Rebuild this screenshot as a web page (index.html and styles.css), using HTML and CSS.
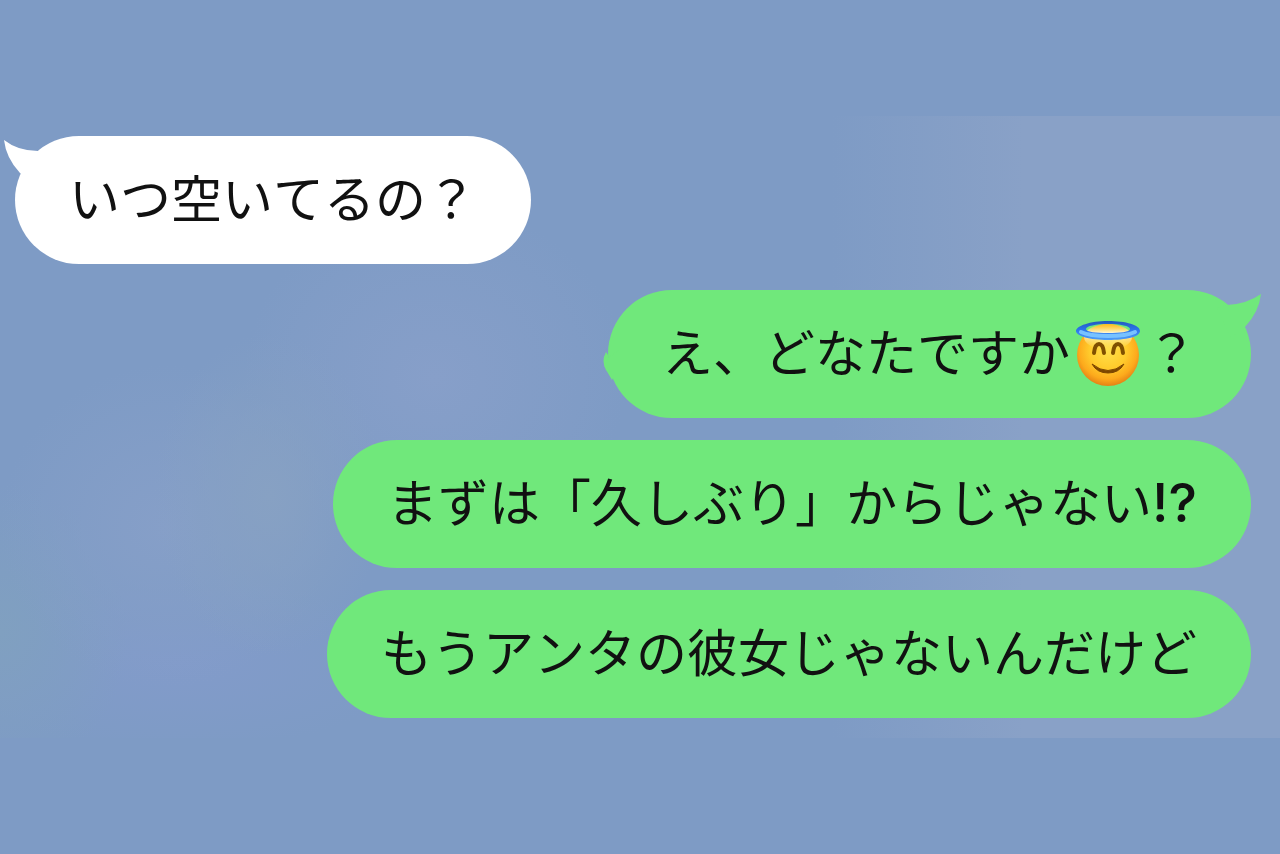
FILE: index.html
```html
<!DOCTYPE html>
<html lang="ja">
<head>
<meta charset="utf-8">
<meta name="viewport" content="width=device-width, initial-scale=1">
<title>トーク</title>
<link rel="stylesheet" href="styles.css">
</head>
<body>
<main class="chat">
  <p class="bubble bubble-in">
    <svg class="tail tail-in" viewBox="0 0 44 44" aria-hidden="true"><path d="M0 0Q14 11 34 11L44 14L30 44L16 33Q2 18 0 0Z"/></svg>
    いつ空いてるの？
  </p>
  <div class="replies">
    <p class="bubble bubble-out">
      <svg class="nub" viewBox="0 0 16 34" aria-hidden="true"><path d="M3 2L5 5L5 8L16 0V34L10 28L9 30Q5 23 3 20Q-2 11 3 2Z"/></svg>
      <svg class="tail tail-out" viewBox="0 0 44 44" aria-hidden="true"><path d="M44 0Q30 10 10 11L0 14L14 44L28 33Q42 18 44 0Z"/></svg>
      え、どなたですか<svg class="emoji" viewBox="0 0 64 66" role="img" aria-label="😇">
        <defs>
          <radialGradient id="face" cx=".5" cy=".42" r=".6">
            <stop offset="0" stop-color="#ffe04a"/><stop offset=".5" stop-color="#ffcb2c"/><stop offset=".78" stop-color="#fdaa1c"/><stop offset="1" stop-color="#e07a14"/>
          </radialGradient>
          <linearGradient id="shine" x1="0" y1="0" x2="0" y2="1">
            <stop offset="0" stop-color="#ffc21c" stop-opacity=".5"/><stop offset=".35" stop-color="#fffbe0" stop-opacity=".95"/><stop offset="1" stop-color="#ffe36a" stop-opacity="0"/>
          </linearGradient>
          <linearGradient id="halo" x1="0" y1="0" x2="0" y2="1">
            <stop offset="0" stop-color="#2259bd"/><stop offset=".45" stop-color="#2b74ea"/><stop offset="1" stop-color="#4f9df6"/>
          </linearGradient>
        </defs>
        <circle cx="32" cy="34" r="31" fill="url(#face)"/>
        <ellipse cx="32" cy="16" rx="24" ry="13" fill="url(#shine)"/>
        <path fill="url(#halo)" fill-rule="evenodd" d="M32 0C50 0 64 4 64 10S50 19 32 19S0 15 0 10S14 0 32 0ZM32 3C20 3 10 5 10 8S20 12 32 12S54 11 54 8S44 3 32 3Z"/>
        <path d="M5 11Q13 15 32 15T59 11" fill="none" stroke="#78c2ff" stroke-width="4" stroke-linecap="round"/>
        <path d="M18 32Q19 23 23 23T28 32M37 32Q38 23 42 23T47 32" fill="none" stroke="#805000" stroke-width="4" stroke-linecap="round"/>
        <path d="M16 43Q32 56 48 43Q43 52 32 52T16 43Z" fill="#7d4700" stroke="#7d4700" stroke-linejoin="round"/>
      </svg>？
    </p>
    <p class="bubble bubble-out">まずは「久しぶり」からじゃない<span class="punct">!?</span></p>
    <p class="bubble bubble-out">もうアンタの彼女じゃないんだけど</p>
  </div>
</main>
</body>
</html>
```
FILE: styles.css
```css
* {
  box-sizing: border-box;
}

body {
  margin: 0;
  min-height: 100vh;
  display: flex;
  flex-direction: column;
  justify-content: center;
  background: #7e9bc5;
  color: #111;
  font-family: "Noto Sans CJK JP", sans-serif;
  font-size: 51px;
  font-weight: 400;
  font-kerning: none;
  line-height: 64px;
}

.chat {
  display: flex;
  flex-direction: column;
  gap: 26px;
  padding: 20px 29px 20px 15px;
  background:
    radial-gradient(ellipse 9% 26% at 21% 61%, #87a1c3, transparent),
    radial-gradient(ellipse 13% 26% at 13% 66%, #869fc8, transparent),
    radial-gradient(ellipse 15% 28% at 34% 42%, #879fc9, transparent),
    radial-gradient(ellipse 10% 24% at 0% 83%, #80a0c0, transparent),
    radial-gradient(ellipse 18% 14% at 14% 88%, #829bca, transparent),
    linear-gradient(90deg, transparent 65%, #89a1c7 80%),
    #7e9bc5;
}

.replies {
  display: flex;
  flex-direction: column;
  align-items: flex-end;
  gap: 22px;
}

.bubble {
  position: relative;
  margin: 0;
  padding: 28px 54px 36px;
  border-radius: 64px;
}

.bubble-in {
  align-self: flex-start;
  background: #fff;
}

.bubble-out {
  background: #70e87b;
}

.tail {
  position: absolute;
  top: 4px;
  width: 44px;
  height: 44px;
}

.tail-in {
  left: -11px;
  fill: #fff;
}

.tail-out {
  right: -10px;
  fill: #70e87b;
}

.nub {
  position: absolute;
  top: 60px;
  left: -5px;
  width: 16px;
  height: 34px;
  fill: #70e87b;
}

.emoji {
  width: 64px;
  height: 66px;
  margin: -16px 6px -8px;
  vertical-align: middle;
}

.punct {
  font-family: Inter, "Noto Sans CJK JP", sans-serif;
  font-size: 54px;
  font-weight: 500;
  line-height: 1;
}
```
